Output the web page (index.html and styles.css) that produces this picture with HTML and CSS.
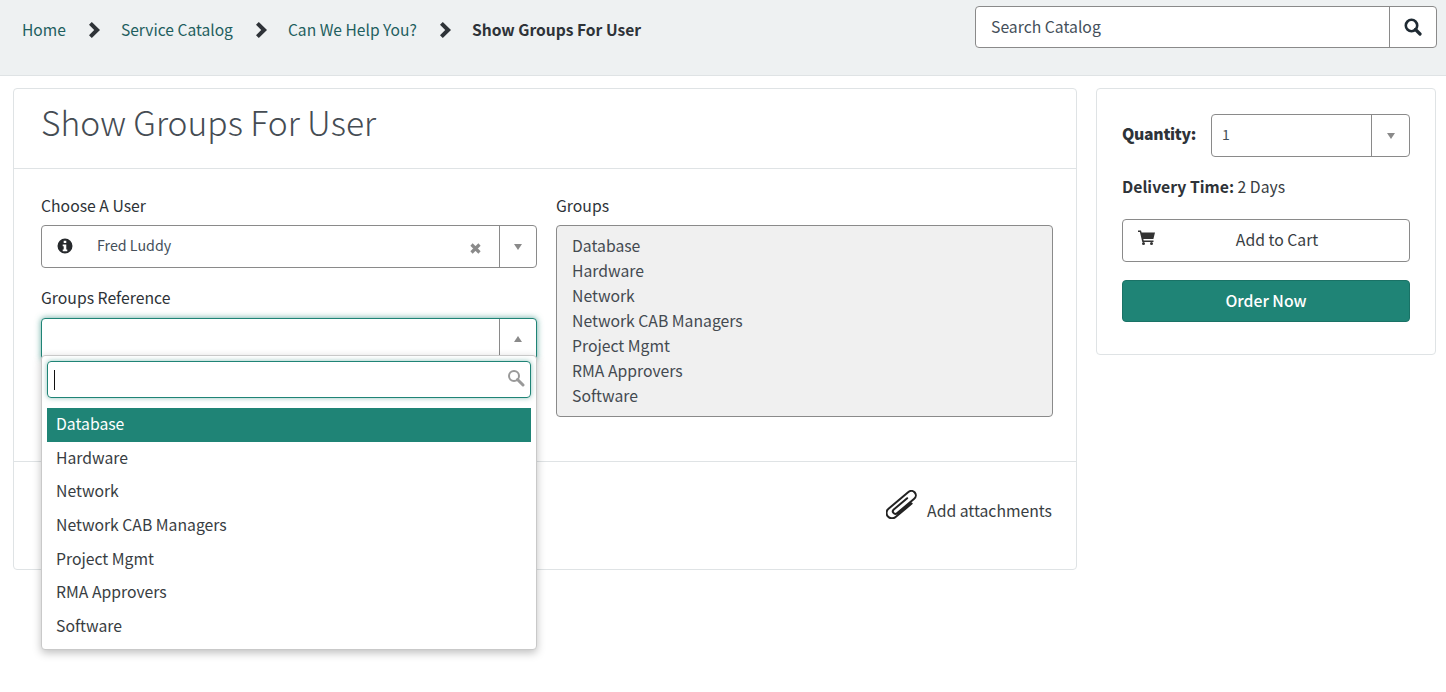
FILE: index.html
```html
<!DOCTYPE html>
<html lang="en">
<head>
    <meta charset="UTF-8">
    <title>Show Groups For User</title>
    <link rel="stylesheet" href="styles.css">
</head>
<body>
    <header class="topbar">
        <nav class="crumbs">
            <a href="#">Home</a>
            <svg class="crumb-sep" viewBox="0 0 12 16"><path d="M1 2.800 3.800 0 12 8 3.800 16 1 13.200 6.200 8z"/></svg>
            <a href="#">Service Catalog</a>
            <svg class="crumb-sep" viewBox="0 0 12 16"><path d="M1 2.800 3.800 0 12 8 3.800 16 1 13.200 6.200 8z"/></svg>
            <a href="#">Can We Help You?</a>
            <svg class="crumb-sep" viewBox="0 0 12 16"><path d="M1 2.800 3.800 0 12 8 3.800 16 1 13.200 6.200 8z"/></svg>
            <span class="crumb-current">Show Groups For User</span>
        </nav>
        <div class="search">
            <span class="search-text">Search Catalog</span>
            <span class="search-btn">
                <svg width="18" height="18" viewBox="0 0 18 18"><circle cx="7.500" cy="7.500" r="5.700" fill="none" stroke="#1f2a33" stroke-width="2.600"/><path d="M11.500 11.500 16 16" stroke="#1f2a33" stroke-width="3.200" stroke-linecap="round"/></svg>
            </span>
        </div>
    </header>

    <main class="page">
        <section class="card">
            <h1 class="title">Show Groups For User</h1>
            <div class="form">
                <div class="col">
                    <label class="lbl">Choose A User</label>
                    <div class="select">
                        <svg class="info" width="16" height="16" viewBox="0 0 16 16"><path fill-rule="evenodd" d="M8 .5a7.500 7.500 0 1 0 0 15 7.500 7.500 0 0 0 0-15zM6.700 2.800h2.600v2.200H6.700zM5.700 6.400h3.600v5h1v1.800H5.700v-1.800h1V8.200h-1z"/></svg>
                        <span class="select-val">Fred Luddy</span>
                        <svg class="clear" width="11" height="11" viewBox="0 0 11 11"><path d="M1.500 1.500 9.500 9.500M9.500 1.500 1.500 9.500" stroke="#8a8a8a" stroke-width="3.200"/></svg>
                        <span class="select-arrow"><i class="tri-down"></i></span>
                    </div>
                    <label class="lbl lbl-next">Groups Reference</label>
                    <div class="select select-open">
                        <span class="select-arrow"><i class="tri-up"></i></span>
                    </div>
                </div>
                <div class="col">
                    <label class="lbl">Groups</label>
                    <div class="readonly">
                        <div>Database</div>
                        <div>Hardware</div>
                        <div>Network</div>
                        <div>Network CAB Managers</div>
                        <div>Project Mgmt</div>
                        <div>RMA Approvers</div>
                        <div>Software</div>
                    </div>
                </div>
            </div>
            <div class="foot">
                <svg class="clip" width="32" height="29" viewBox="0 0 32 29"><path transform="translate(16 14.500) rotate(-40)" d="M8 5.500H-13A5.500 5.500 0 0 1-13-5.500H13A4.500 4.500 0 0 1 13 3.500H-9.500A2.500 2.500 0 0 1-9.500-1.500H8" fill="none" stroke="#222" stroke-width="2" stroke-linecap="round"/></svg>
                <span>Add attachments</span>
            </div>
        </section>

        <aside class="card side">
            <div class="qty">
                <b>Quantity:</b>
                <div class="select select-qty">
                    <span class="select-val">1</span>
                    <span class="select-arrow"><i class="tri-down"></i></span>
                </div>
            </div>
            <p class="delivery"><b>Delivery Time:</b> 2 Days</p>
            <button class="btn">
                <svg class="cart" width="17" height="15" viewBox="0 0 17 15"><path d="M0 .5h3l.6 2H17l-1.600 6.500H5.300l.4 1.500h9.800V12H4.300L1.900 2H0z" fill="#333"/><circle cx="5.500" cy="13.500" r="1.500" fill="#333"/><circle cx="13.500" cy="13.500" r="1.500" fill="#333"/></svg>
                Add to Cart
            </button>
            <button class="btn btn-primary">Order Now</button>
        </aside>
    </main>

    <!-- open dropdown of Groups Reference -->
    <div class="drop">
        <div class="drop-search">
            <span class="caret"></span>
            <svg class="drop-icon" width="18" height="18" viewBox="0 0 18 18"><circle cx="7" cy="7" r="5" fill="none" stroke="#999" stroke-width="2"/><path d="M10.500 10.500 16 16" stroke="#999" stroke-width="3" stroke-linecap="round"/></svg>
        </div>
        <ul class="drop-list">
            <li class="active">Database</li>
            <li>Hardware</li>
            <li>Network</li>
            <li>Network CAB Managers</li>
            <li>Project Mgmt</li>
            <li>RMA Approvers</li>
            <li>Software</li>
        </ul>
    </div>
</body>
</html>
```

FILE: styles.css
```css
* {
    box-sizing: border-box;
}
body {
    margin: 0;
    font-family: "Noto Sans CJK SC", "Source Sans Pro", Lato, sans-serif;
    font-size: 15.750px;
    line-height: 25px;
    color: #383d42;
    background: #fff;
}
.topbar {
    height: 76px;
    background: #eef1f2;
    border-bottom: 1px solid #dfe3e5;
    display: flex;
    justify-content: space-between;
    padding: 6px 9px 0 22px;
}
.crumbs {
    display: flex;
    align-items: center;
    height: 47px;
    font-size: 15.600px;
}
.crumbs a {
    color: #1f5f5f;
    text-decoration: none;
}
.crumb-sep {
    width: 12px;
    height: 16px;
    margin: 0 21px 0 22px;
    fill: #2e3338;
}
.crumb-current {
    font-weight: 700;
    color: #2e3338;
}
.search {
    width: 462px;
    height: 42px;
    background: #fff;
    border: 1px solid #8a8a8a;
    border-radius: 4px;
    display: flex;
    align-items: center;
    justify-content: space-between;
    padding-left: 15px;
}
.search-text {
    color: #444f5a;
    margin-bottom: 2px;
}
.search-btn {
    width: 47px;
    height: 100%;
    border-left: 1px solid #8a8a8a;
    display: flex;
    align-items: center;
    justify-content: center;
}
.page {
    display: grid;
    grid-template-columns: 1064px 340px;
    column-gap: 19px;
    align-items: start;
    padding: 12px 0 0 13px;
}
.card {
    background: #fff;
    border: 1px solid #dfe3e5;
    border-radius: 4px;
}
.title {
    margin: 0;
    height: 80px;
    padding: 8px 27px 0;
    font-family: "Noto Sans CJK SC Light", "Noto Sans CJK SC", sans-serif;
    font-size: 33.600px;
    line-height: 50px;
    font-weight: 300;
    color: #454c53;
    border-bottom: 1px solid #dfe3e5;
}
.form {
    display: grid;
    grid-template-columns: 496px 497px;
    column-gap: 19px;
    height: 293px;
    padding: 25px 0 0 27px;
    border-bottom: 1px solid #dfe3e5;
}
.lbl {
    display: block;
    height: 31px;
    line-height: 24px;
    color: #2e3338;
}
.lbl-next {
    margin-top: 19px;
    line-height: 22px;
}
.select {
    height: 43px;
    border: 1px solid #8a8a8a;
    border-radius: 4px;
    display: flex;
    align-items: center;
    font-size: 14.250px;
    color: #444f5a;
    background: #fff;
}
.info {
    margin: -2px 0 0 15px;
    fill: #26292c;
}
.select-val {
    flex: 1;
    padding: 0 0 4px 24px;
}
.clear {
    margin-right: 18px;
    margin-top: 3px;
}
.select-arrow {
    width: 37px;
    height: 100%;
    margin-left: auto;
    border-left: 1px solid #8a8a8a;
    display: flex;
    align-items: center;
    justify-content: center;
}
.tri-down,
.tri-up {
    width: 0;
    height: 0;
    border-left: 4px solid transparent;
    border-right: 4px solid transparent;
}
.tri-down {
    border-top: 6px solid #8a8a8a;
}
.tri-up {
    border-bottom: 6px solid #8a8a8a;
}
.select-open {
    height: 42px;
    border-color: #1f8476;
    box-shadow: 0 0 6px rgba(31, 132, 118, .7);
}
.readonly {
    height: 192px;
    padding: 7px 15px;
    background: #f0f0f0;
    border: 1px solid #8a8a8a;
    border-radius: 4px;
    color: #444a50;
}
.foot {
    height: 107px;
    display: flex;
    justify-content: flex-end;
    align-items: flex-start;
    gap: 9px;
    padding: 28px 24px 0 0;
}
.foot span {
    margin-top: 8px;
}
.side {
    height: 267px;
    padding: 25px 25px 0;
}
.qty {
    display: flex;
    align-items: center;
    gap: 15px;
    font-weight: 700;
}
.qty b {
    color: #2e3338;
    margin-bottom: 5px;
    letter-spacing: -.3px;
}
.select-qty {
    flex: 1;
    font-weight: 400;
    font-size: 14px;
}
.select-qty .select-val {
    padding: 0 0 3px 10px;
}
.select-qty .select-arrow {
    width: 38px;
}
.delivery {
    margin: 17px 0 20px;
}
.delivery b {
    color: #2e3338;
}
.btn {
    display: block;
    position: relative;
    width: 100%;
    height: 43px;
    margin-bottom: 18px;
    padding: 0 0 2px 22px;
    border: 1px solid #8a8a8a;
    border-radius: 4px;
    background: #fff;
    color: #383d42;
    font: inherit;
}
.cart {
    position: absolute;
    left: 15px;
    top: 10px;
}
.btn-primary {
    height: 42px;
    padding: 0 0 2px;
    background: #1f8476;
    border-color: #1a7266;
    color: #fff;
    font-weight: 500;
}
.drop {
    position: absolute;
    left: 41px;
    top: 355px;
    width: 496px;
    height: 295px;
    background: #fff;
    border: 1px solid #c9c9c9;
    border-radius: 4px;
    box-shadow: 0 3px 8px rgba(0, 0, 0, .25);
    padding: 5px;
}
.drop-search {
    height: 37px;
    border: 1px solid #1f8476;
    border-radius: 4px;
    box-shadow: 0 0 5px rgba(31, 132, 118, .5);
    display: flex;
    align-items: center;
    justify-content: space-between;
    padding: 0 5px 0 6px;
}
.drop-icon {
    margin-bottom: 3px;
}
.caret {
    width: 1px;
    height: 20px;
    background: #111;
}
.drop-list {
    list-style: none;
    margin: 10px 0 0;
    padding: 0;
}
.drop-list li {
    height: 33.700px;
    line-height: 31px;
    padding-left: 9px;
}
.drop-list .active {
    background: #1f8476;
    color: #fff;
}
```
